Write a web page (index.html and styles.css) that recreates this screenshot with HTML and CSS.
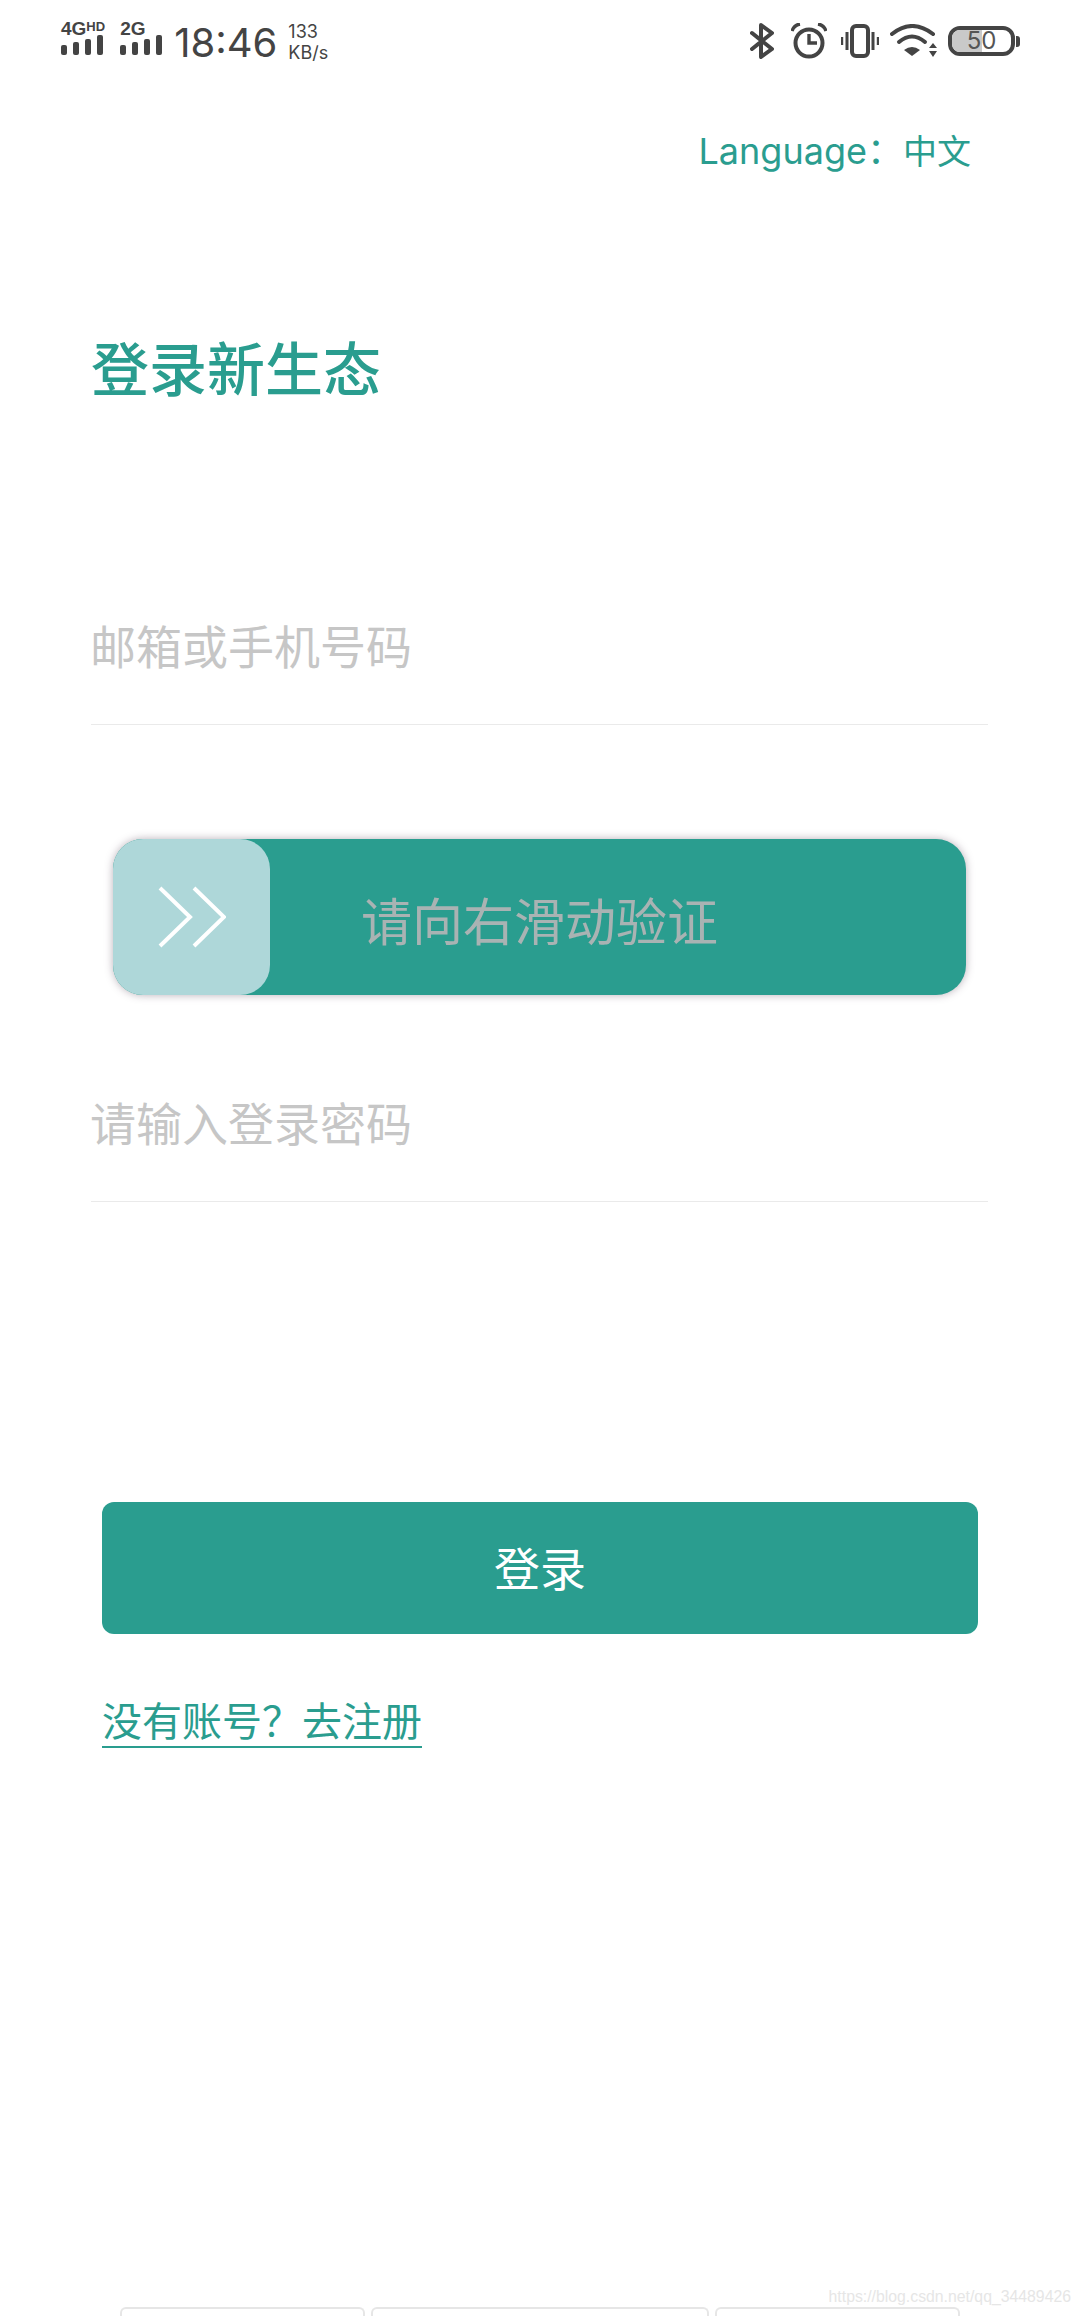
FILE: index.html
```html
<html lang="zh-CN">
  <head>
    <meta charset="UTF-8" />
    <meta name="viewport" content="width=device-width, initial-scale=1.0" />
    <title>登录新生态</title>
    <link rel="stylesheet" href="styles.css">
  </head>
  <body>
    <div class="page">
      <div class="status-bar">
        <div class="status-left">
          <div class="signal">
            <div class="signal-label"><span class="net">4G</span><span class="net-sup">HD</span></div>
            <svg class="bars" width="42" height="20" viewBox="0 0 42 20">
              <rect x="0" y="10" width="6" height="10" rx="2" />
              <rect x="12" y="7" width="6" height="13" rx="2" />
              <rect x="24" y="4" width="6" height="16" rx="2" />
              <rect x="36" y="0" width="6" height="20" rx="2" />
            </svg>
          </div>
          <div class="signal signal-two">
            <div class="signal-label"><span class="net">2G</span></div>
            <svg class="bars" width="42" height="20" viewBox="0 0 42 20">
              <rect x="0" y="10" width="6" height="10" rx="2" />
              <rect x="12" y="7" width="6" height="13" rx="2" />
              <rect x="24" y="4" width="6" height="16" rx="2" />
              <rect x="36" y="0" width="6" height="20" rx="2" />
            </svg>
          </div>
          <span class="clock">18:46</span>
          <div class="speed"><span>133</span><span>KB/s</span></div>
        </div>
        <div class="status-right">
          <svg class="icon-bt" width="24" height="36" viewBox="0 0 24 36" fill="none" stroke="#444" stroke-width="4" stroke-linecap="round" stroke-linejoin="round">
            <path d="M2 10 L22 26 L11 34 L11 2 L22 10 L2 26" />
          </svg>
          <svg class="icon-alarm" width="36" height="36" viewBox="0 0 36 36" fill="none" stroke="#444">
            <circle cx="18" cy="20" r="13.5" stroke-width="4" />
            <path d="M18 11 V20 H26" stroke-width="3.4" />
            <path d="M1 8 Q3 2 9 1 M35 8 Q33 2 27 1" stroke-width="3.4" />
          </svg>
          <svg class="icon-vibrate" width="38" height="34" viewBox="0 0 38 34" fill="none" stroke="#444">
            <rect x="11" y="2" width="16" height="30" rx="4" stroke-width="4" />
            <path d="M6 8 V26 M32 8 V26" stroke-width="3" />
            <path d="M1 13 V21 M37 13 V21" stroke-width="2.4" />
          </svg>
          <svg class="icon-wifi" width="47" height="34" viewBox="0 0 47 34" fill="none" stroke="#444" stroke-width="4" stroke-linecap="round">
            <path d="M2 10 Q22 -6 43 10" />
            <path d="M9 18 Q22 7 35 18" />
            <path d="M22 32 L14 26 Q22 20 30 26 Z" fill="#444" stroke="none" />
            <path d="M43 19 L47 24 H39 Z M43 33 L47 27 H39 Z" fill="#444" stroke="none" />
          </svg>
          <div class="battery">
            <div class="battery-body">
              <div class="battery-fill"></div>
              <span class="battery-level">50</span>
            </div>
            <div class="battery-tip"></div>
          </div>
        </div>
      </div>

      <div class="language">Language：<span class="language-value">中文</span></div>

      <h1 class="title">登录新生态</h1>

      <div class="field field-account">邮箱或手机号码</div>

      <div class="slider">
        <div class="slider-thumb">
          <svg width="68" height="62" viewBox="0 0 68 62" fill="none" stroke="#fff" stroke-width="4">
            <path d="M2 2 L32 31 L2 60" />
            <path d="M36 2 L66 31 L36 60" />
          </svg>
        </div>
        <span class="slider-text">请向右滑动验证</span>
      </div>

      <div class="field field-password">请输入登录密码</div>

      <button class="login">登录</button>

      <a class="register">没有账号？去注册</a>

      <div class="keys">
        <div class="key key-one"></div>
        <div class="key key-two"></div>
        <div class="key key-three"></div>
      </div>

      <div class="watermark">https://blog.csdn.net/qq_34489426</div>
    </div>
  </body>
</html>
```

FILE: styles.css
```css
html,
body {
  margin: 0;
  padding: 0;
  background: #fff;
}

.page {
  position: relative;
  width: 1080px;
  height: 2316px;
  overflow: hidden;
  font-family: "Inter", "Noto Sans CJK SC", sans-serif;
}

.status-bar {
  height: 82px;
  padding: 0 60px 0 61px;
  display: flex;
  justify-content: space-between;
  align-items: center;
}

.status-left,
.status-right {
  display: flex;
  align-items: center;
}

.signal {
  display: flex;
  flex-direction: column;
  margin-top: -6px;
}

.signal-two {
  margin-left: 15px;
}

.signal-label {
  height: 14px;
  color: #444;
  font-family: "Liberation Sans", sans-serif;
  font-weight: bold;
  display: flex;
  align-items: flex-start;
}

.net {
  font-size: 19px;
  line-height: 15px;
}

.net-sup {
  font-size: 13px;
  line-height: 11px;
}

.bars {
  fill: #444;
  display: block;
}

.clock {
  margin-left: 12px;
  margin-top: 3px;
  font-size: 40px;
  line-height: 50px;
  color: #444;
}

.speed {
  margin-left: 11px;
  margin-top: 2px;
  display: flex;
  flex-direction: column;
  font-size: 18px;
  line-height: 21px;
  color: #444;
}

.icon-alarm {
  margin-left: 17px;
}

.icon-vibrate {
  margin-left: 14px;
}

.icon-wifi {
  margin-left: 11px;
}

.battery {
  margin-left: 11px;
  display: flex;
  align-items: center;
}

.battery-body {
  position: relative;
  box-sizing: border-box;
  width: 67px;
  height: 30px;
  border: 4px solid #444;
  border-radius: 12px;
  display: flex;
  align-items: center;
  justify-content: center;
  overflow: hidden;
}

.battery-fill {
  position: absolute;
  left: 0;
  top: 0;
  bottom: 0;
  width: 30px;
  background: #c9c9c9;
}

.battery-level {
  position: relative;
  font-size: 24px;
  line-height: 24px;
  color: #555;
}

.battery-tip {
  width: 4px;
  height: 11px;
  margin-left: 1px;
  background: #444;
  border-radius: 0 3px 3px 0;
}

.language {
  margin-top: 46px;
  padding-right: 109px;
  text-align: right;
  font-size: 36px;
  line-height: 46px;
  color: #2a9d8f;
}

.language-value {
  font-size: 34px;
}

.title {
  margin: 160px 0 0 91px;
  font-size: 58px;
  line-height: 70px;
  font-weight: 500;
  color: #2a9d8f;
}

.field {
  margin: 0 92px 0 91px;
  height: 107px;
  line-height: 60px;
  font-size: 46px;
  text-indent: -1px;
  color: #c6c6c6;
  border-bottom: 1px solid #eaeaea;
}

.field-account {
  margin-top: 212px;
}

.field-password {
  margin-top: 99px;
}

.slider {
  margin: 114px 114px 0 113px;
  height: 156px;
  background: #2a9d8f;
  border-radius: 30px;
  box-shadow: 0 0 8px rgba(80, 60, 80, 0.4);
  display: flex;
  align-items: center;
}

.slider-thumb {
  width: 157px;
  height: 156px;
  background: #aed7d9;
  border-radius: 30px;
  display: flex;
  align-items: center;
  justify-content: center;
}

.slider-text {
  margin-left: 91px;
  margin-top: 4px;
  font-size: 51px;
  color: #a9b3b3;
}

.login {
  display: block;
  margin: 300px 0 0 102px;
  padding: 0 0 4px;
  width: 876px;
  height: 132px;
  border: none;
  border-radius: 12px;
  background: #2a9d8f;
  color: #fff;
  font-family: inherit;
  font-size: 46px;
}

.register {
  display: inline-block;
  margin: 64px 0 0 102px;
  font-size: 40px;
  line-height: 48px;
  color: #2a9d8f;
  border-bottom: 2px solid #2a9d8f;
}

.keys {
  position: absolute;
  left: 120px;
  top: 2307px;
  display: flex;
  gap: 6px;
}

.key {
  height: 20px;
  border: 2px solid #e6e6e6;
  border-bottom: none;
  border-radius: 6px 6px 0 0;
  box-sizing: border-box;
}

.key-one {
  width: 245px;
}

.key-two {
  width: 338px;
}

.key-three {
  width: 245px;
}

.watermark {
  position: absolute;
  right: 9px;
  top: 2288px;
  font-family: "Liberation Sans", sans-serif;
  font-size: 15.8px;
  color: #e6e6e6;
}
```
